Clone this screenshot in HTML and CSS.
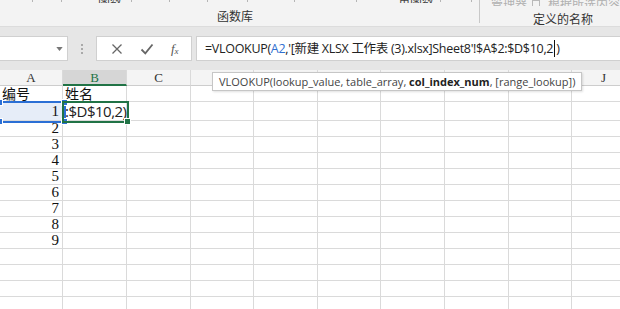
FILE: index.html
```html
<!DOCTYPE html>
<html lang="zh-CN">
<head>
    <meta charset="UTF-8">
    <title>函数库 - VLOOKUP</title>
    <link rel="stylesheet" href="styles.css">
</head>
<body>
    <div class="ribbon">
        <div class="ribbon-groups">
            <div class="group group-lib">
                <div class="group-cmds">
                    <span class="tick" style="margin-left:32px"></span>
                    <span class="tick" style="margin-left:28px"></span>
                    <span class="cmd" style="margin-left:36px">函数</span>
                    <span class="tick" style="margin-left:9px"></span>
                    <span class="tick" style="margin-left:37px"></span>
                    <span class="tick" style="margin-left:37px"></span>
                    <span class="tick" style="margin-left:39px"></span>
                    <span class="tick" style="margin-left:46px"></span>
                    <span class="tick" style="margin-left:61px"></span>
                    <span class="cmd" style="margin-left:29px">二角函数</span>
                    <span class="tick" style="margin-left:6px"></span>
                    <span class="tick" style="margin-left:30px"></span>
                </div>
                <div class="group-label">函数库</div>
            </div>
            <div class="group group-names">
                <div class="group-cmds">
                    <span class="cmd muted" style="margin-left:11px">管理器</span>
                    <span class="mini-icon"></span>
                    <span class="cmd muted" style="margin-left:8px">根据所选内容</span>
                </div>
                <div class="group-label">定义的名称</div>
            </div>
        </div>
    </div>

    <div class="formula-area">
        <div class="name-box">
            <svg class="drop" width="8" height="5" viewBox="0 0 8 5"><path d="M0 0h8L4 5z" fill="#777"/></svg>
        </div>
        <div class="grip"><i></i><i></i><i></i></div>
        <div class="fx-buttons">
            <svg width="12" height="12" viewBox="0 0 12 12"><path d="M1.5 1.5l9 9M10.5 1.5l-9 9" stroke="#666" stroke-width="1.3" fill="none"/></svg>
            <svg width="14" height="12" viewBox="0 0 14 12"><path d="M1.5 6.5l3.8 3.8L12.5 1.5" stroke="#666" stroke-width="1.8" fill="none"/></svg>
            <span class="fx">f<sub>x</sub></span>
        </div>
        <div class="formula-input">=VLOOKUP(<span class="ref">A2</span>,'[新建 XLSX 工作表 (3).xlsx]Sheet8'!$A$2:$D$10,2<span class="caret"></span>)</div>
    </div>

    <div class="sheet">
        <div class="grid">
            <div class="hd">A</div><div class="hd hd-active">B</div><div class="hd">C</div><div class="hd"></div><div class="hd"></div><div class="hd"></div><div class="hd"></div><div class="hd"></div><div class="hd"></div><div class="hd">J</div>

            <div class="c txt">编号</div><div class="c txt">姓名</div><div class="c"></div><div class="c"></div><div class="c"></div><div class="c"></div><div class="c"></div><div class="c"></div><div class="c"></div><div class="c"></div>

            <div class="c num sel">1</div><div class="c edit">:$D$10,2)</div><div class="c"></div><div class="c"></div><div class="c"></div><div class="c"></div><div class="c"></div><div class="c"></div><div class="c"></div><div class="c"></div>

            <div class="c num">2</div><div class="c"></div><div class="c"></div><div class="c"></div><div class="c"></div><div class="c"></div><div class="c"></div><div class="c"></div><div class="c"></div><div class="c"></div>
            <div class="c num">3</div><div class="c"></div><div class="c"></div><div class="c"></div><div class="c"></div><div class="c"></div><div class="c"></div><div class="c"></div><div class="c"></div><div class="c"></div>
            <div class="c num">4</div><div class="c"></div><div class="c"></div><div class="c"></div><div class="c"></div><div class="c"></div><div class="c"></div><div class="c"></div><div class="c"></div><div class="c"></div>
            <div class="c num">5</div><div class="c"></div><div class="c"></div><div class="c"></div><div class="c"></div><div class="c"></div><div class="c"></div><div class="c"></div><div class="c"></div><div class="c"></div>
            <div class="c num">6</div><div class="c"></div><div class="c"></div><div class="c"></div><div class="c"></div><div class="c"></div><div class="c"></div><div class="c"></div><div class="c"></div><div class="c"></div>
            <div class="c num">7</div><div class="c"></div><div class="c"></div><div class="c"></div><div class="c"></div><div class="c"></div><div class="c"></div><div class="c"></div><div class="c"></div><div class="c"></div>
            <div class="c num">8</div><div class="c"></div><div class="c"></div><div class="c"></div><div class="c"></div><div class="c"></div><div class="c"></div><div class="c"></div><div class="c"></div><div class="c"></div>
            <div class="c num">9</div><div class="c"></div><div class="c"></div><div class="c"></div><div class="c"></div><div class="c"></div><div class="c"></div><div class="c"></div><div class="c"></div><div class="c"></div>
            <div class="c"></div><div class="c"></div><div class="c"></div><div class="c"></div><div class="c"></div><div class="c"></div><div class="c"></div><div class="c"></div><div class="c"></div><div class="c"></div>
            <div class="c"></div><div class="c"></div><div class="c"></div><div class="c"></div><div class="c"></div><div class="c"></div><div class="c"></div><div class="c"></div><div class="c"></div><div class="c"></div>
            <div class="c"></div><div class="c"></div><div class="c"></div><div class="c"></div><div class="c"></div><div class="c"></div><div class="c"></div><div class="c"></div><div class="c"></div><div class="c"></div>
            <div class="c"></div><div class="c"></div><div class="c"></div><div class="c"></div><div class="c"></div><div class="c"></div><div class="c"></div><div class="c"></div><div class="c"></div><div class="c"></div>
        </div>

        <!-- 选区和编辑框覆盖在网格上 -->
        <div class="range-box">
            <span class="handle h-tl"></span><span class="handle h-tr"></span>
            <span class="handle h-bl"></span><span class="handle h-br"></span>
        </div>
        <div class="edit-box"><span class="fill-handle"></span></div>

        <div class="tooltip">VLOOKUP(lookup_value, table_array, <b>col_index_num</b>, [range_lookup])</div>
    </div>
</body>
</html>
```

FILE: styles.css
```css
:root {
    --grid-line: #dadada;
    --excel-green: #217346;
    --sel-blue: #2b6fd5;
    --ui-font: "Open Sans", "Noto Sans CJK SC", sans-serif;
}

body {
    margin: 0;
    width: 620px;
    height: 309px;
    overflow: hidden;
    background: #fff;
    font-family: var(--ui-font);
}

/* ---------- ribbon ---------- */

.ribbon {
    height: 26px;
    background: #f3f3f3;
    border-bottom: 1px solid #dcdcdc;
    overflow: hidden;
}

.ribbon-groups {
    display: flex;
}

.group {
    display: flex;
    flex-direction: column;
}

.group-lib {
    width: 493px;
    border-right: 1px solid #c8c8c8;
    height: 23px;
}

.group-names {
    flex: 1;
}

.group-cmds {
    display: flex;
    align-items: flex-end;
    height: 6px;
    overflow: hidden;
    white-space: nowrap;
}

.cmd {
    font-family: "Noto Sans CJK SC", sans-serif;
    font-size: 12px;
    line-height: 12px;
    margin-bottom: -4px;
    color: #444;
}

.cmd.muted {
    color: #b0b0b0;
}

.tick {
    width: 1px;
    height: 4px;
    background: #b5b5b5;
    flex-shrink: 0;
    margin-bottom: 1px;
}

.mini-icon {
    width: 8px;
    height: 7px;
    margin-left: 5px;
    border: 1px solid #b9b9b9;
    box-sizing: border-box;
    margin-bottom: -1px;
}

.group-label {
    font-family: "Noto Sans CJK SC", sans-serif;
    font-size: 12px;
    line-height: 14px;
    height: 14px;
    color: #333;
    padding-top: 6px;
}

.group-lib .group-label {
    padding-left: 217px;
}

.group-names .group-label {
    padding-left: 53px;
}

/* ---------- formula bar ---------- */

.formula-area {
    display: flex;
    align-items: center;
    height: 43px;
    background: #e6e6e6;
}

.name-box {
    width: 68px;
    height: 25px;
    background: #fff;
    border: 1px solid #d0d0d0;
    border-left: none;
    box-sizing: border-box;
    display: flex;
    align-items: center;
    justify-content: flex-end;
    padding-right: 4px;
}

.drop {
    width: 7px;
    height: 4px;
}

.grip {
    width: 28px;
    display: flex;
    flex-direction: column;
    align-items: center;
    gap: 2px;
}

.grip i {
    width: 2px;
    height: 2px;
    background: #a9a9a9;
}

.fx-buttons {
    width: 96px;
    height: 25px;
    background: #fff;
    border: 1px solid #d0d0d0;
    box-sizing: border-box;
    display: flex;
    align-items: center;
    justify-content: space-around;
    padding: 0 4px 0 6px;
}

.fx {
    font-family: "Liberation Serif", serif;
    font-style: italic;
    font-size: 13px;
    color: #555;
}

.fx sub {
    font-size: 9px;
    vertical-align: -1px;
}

.formula-input {
    flex: 1;
    margin-left: 4px;
    height: 25px;
    background: #fff;
    border: 1px solid #d0d0d0;
    border-right: none;
    box-sizing: border-box;
    padding-left: 8px;
    font-size: 12.5px;
    letter-spacing: -0.3px;
    line-height: 23px;
    color: #222;
    white-space: nowrap;
    overflow: hidden;
}

.ref {
    color: #2f6fd0;
}

.caret {
    display: inline-block;
    width: 1px;
    height: 17px;
    background: #111;
    vertical-align: -4px;
    margin: 0 1px;
}

/* ---------- sheet ---------- */

.sheet {
    position: relative;
}

.grid {
    display: grid;
    grid-template-columns: 63px 64px 64px 63px 64px 63px 64px 64px 63px 64px;
    grid-template-rows: 16px 16px 19px repeat(12, 16px);
}

.hd {
    background: #f4f4f4;
    border-right: 1px solid var(--grid-line);
    border-bottom: 1px solid #cdcdcd;
    font-family: "Liberation Serif", "Noto Sans CJK SC", serif;
    font-size: 13px;
    line-height: 16px;
    text-align: center;
    color: #333;
}

.hd-active {
    background: #d6d6d6;
    color: var(--excel-green);
    border-bottom: 2px solid var(--excel-green);
}

.c {
    border-right: 1px solid var(--grid-line);
    border-bottom: 1px solid var(--grid-line);
    font-size: 14px;
    line-height: 15px;
    color: #111;
    white-space: nowrap;
}

.txt {
    font-family: "Noto Sans CJK SC", sans-serif;
    padding-left: 2px;
}

.num {
    font-family: "Liberation Serif", serif;
    text-align: right;
    padding-right: 3px;
    font-size: 15px;
}

.sel {
    background: #e6edf8;
    line-height: 19px;
}

.edit {
    font-size: 15px;
    line-height: 19px;
    padding-left: 2px;
    color: #222;
    letter-spacing: -0.5px;
}

.range-box {
    position: absolute;
    left: -2px;
    top: 31px;
    width: 64px;
    height: 18px;
    border: 2px solid var(--sel-blue);
}

.handle {
    position: absolute;
    width: 5px;
    height: 5px;
    background: var(--sel-blue);
    border: 1px solid #fff;
}

.h-tl { left: -4px; top: -4px; }
.h-tr { right: -4px; top: -4px; }
.h-bl { left: -4px; bottom: -4px; }
.h-br { right: -4px; bottom: -4px; }

.edit-box {
    position: absolute;
    left: 62px;
    top: 31px;
    width: 63px;
    height: 18px;
    border: 2px solid var(--excel-green);
}

.fill-handle {
    position: absolute;
    right: -4px;
    bottom: -4px;
    width: 5px;
    height: 5px;
    background: var(--excel-green);
    border: 1px solid #fff;
}

.tooltip {
    position: absolute;
    left: 212px;
    top: 2px;
    width: 370px;
    height: 19px;
    box-sizing: border-box;
    background: #fff;
    border: 1px solid #c6c6c6;
    box-shadow: 1px 1px 2px rgba(0, 0, 0, 0.12);
    padding-left: 6px;
    font-size: 11px;
    line-height: 17px;
    color: #444;
    white-space: nowrap;
}

.tooltip b {
    color: #222;
}
```
